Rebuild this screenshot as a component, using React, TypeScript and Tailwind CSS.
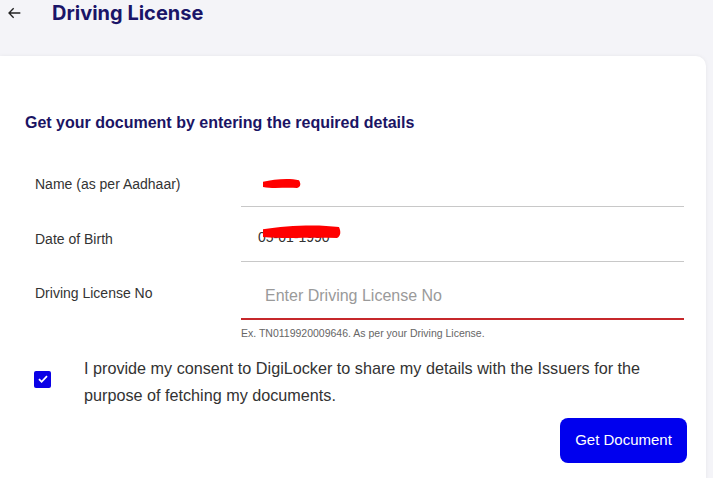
import React, { useState } from "react";

// redacted value scribble
const Scribble = ({ w, h }: { w: number; h: number }) => (
  <svg width={w} height={h} viewBox={`0 0 ${w} ${h}`} className="block">
    <path
      d={`M1 ${h * 0.35} C ${w * 0.3} ${h * 0.1}, ${w * 0.7} 0, ${w - 2} ${h * 0.2} C ${w} ${h * 0.5}, ${w} ${h * 0.8}, ${w - 4} ${h - 1} C ${w * 0.6} ${h - 2}, ${w * 0.3} ${h}, 1 ${h - 2} Z`}
      fill="#f00"
    />
  </svg>
);

const Field = ({ label, children, active }: { label: string; children: React.ReactNode; active?: boolean }) => (
  <div className="flex items-end">
    <div className={`w-[241px] pl-[35px] text-[14px] text-[#333] ${active ? "pb-[16px]" : "pb-[12px]"}`}>{label}</div>
    <div
      className={`flex w-[443px] items-end ${active ? "h-[58px] border-b-2 border-[#c6282b] pb-[10px]" : "h-[55px] border-b border-[#c8c8c8] pb-[14px]"}`}
    >
      {children}
    </div>
  </div>
);

export default function App() {
  const [agree, setAgree] = useState(true);

  return (
    <div className="h-[478px] w-[713px] overflow-hidden bg-[#f4f4f8] font-[Liberation_Sans,Arial,sans-serif]">
      {/* top bar */}
      <div className="flex h-[56px] items-start">
        <button className="ml-[7px] mt-[5px] text-[#222]">
          <svg width="16" height="16" viewBox="0 0 24 24" fill="none" stroke="currentColor" strokeWidth="2">
            <path d="M20 12H4M10 5l-7 7 7 7" />
          </svg>
        </button>
        <h1 className="ml-[29px] mt-[-2px] font-[Inter,sans-serif] text-[20px] font-bold text-[#1a1568]">Driving License</h1>
      </div>

      {/* card */}
      <div className="mr-[7px] h-[430px] rounded-tr-[10px] bg-white shadow-[0_0_4px_rgba(0,0,0,0.06)]">
        <h2 className="pl-[25px] pt-[55px] text-[16px] font-bold text-[#1b1464]">
          Get your document by entering the required details
        </h2>

        <div className="mt-[17px]">
          <Field label="Name (as per Aadhaar)">
            <div className="pb-[3px] pl-[21px]">
              <Scribble w={39} h={11} />
            </div>
          </Field>
          <Field label="Date of Birth">
            <div className="relative pl-[17px] text-[14px] leading-[20px] text-[#333]">
              <span>05-01-1990</span>
              <div className="absolute left-[21px] top-[-3px]">
                <Scribble w={79} h={15} />
              </div>
            </div>
          </Field>
          <Field label="Driving License No" active>
            <input
              placeholder="Enter Driving License No"
              className="w-full bg-transparent pl-[24px] text-[16px] text-[#333] outline-none placeholder:text-[#9a9a9a]"
            />
          </Field>
          <p className="ml-[241px] mt-[6px] text-[10.5px] text-[#666]">Ex. TN0119920009646. As per your Driving License.</p>
        </div>

        <div className="mt-[13px] flex items-start">
          <label className="ml-[34px] mt-[16px] flex h-[17px] w-[17px] cursor-pointer items-center justify-center rounded-[2px] bg-[#0a00e6]">
            <input type="checkbox" className="hidden" checked={agree} onChange={e => setAgree(e.target.checked)} />
            {agree && (
              <svg width="12" height="12" viewBox="0 0 12 12" fill="none" stroke="white" strokeWidth="1.8">
                <path d="M2 6.2l2.6 2.6L10 3.2" />
              </svg>
            )}
          </label>
          <p className="ml-[33px] w-[590px] text-[16.2px] leading-[27px] text-[#333]">
            I provide my consent to DigiLocker to share my details with the Issuers for the purpose of fetching my
            documents.
          </p>
        </div>

        <div className="mr-[19px] mt-[9px] flex justify-end">
          <button className="h-[45px] w-[127px] rounded-[8px] bg-[#0000ee] text-[15px] text-white">Get Document</button>
        </div>
      </div>
    </div>
  );
}
